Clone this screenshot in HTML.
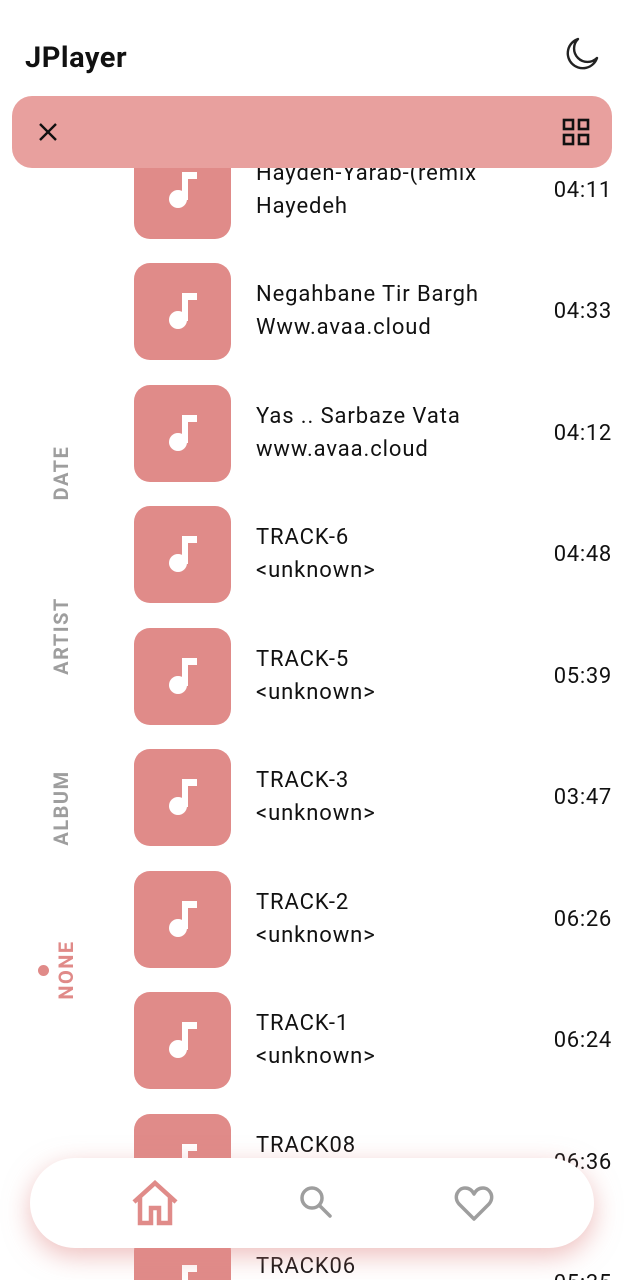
<!DOCTYPE html>
<html style="width:624px;height:1280px;overflow:hidden"><head><meta charset="utf-8"><style>
*{margin:0;padding:0;box-sizing:border-box}
body{width:624px;height:1280px;overflow:hidden;background:#fff;font-family:"Roboto","Liberation Sans",sans-serif;position:relative;color:#111}
.row{position:absolute;left:0;width:624px;height:97px}
.th{position:absolute;left:134px;top:0;width:97px;height:97px;border-radius:16px;background:#e08b89}
.th svg{position:absolute;left:0;top:0}
.t{position:absolute;left:256px;font-size:22px;line-height:24px;white-space:nowrap;letter-spacing:0.9px}
.t1{top:20px}.t2{top:53px}
.d{position:absolute;right:12px;top:37px;font-size:22px;line-height:24px;letter-spacing:0.7px}
.v{position:absolute;transform:rotate(-90deg);font-weight:bold;font-size:20px;color:#9e9e9e;letter-spacing:1.5px;white-space:nowrap;transform-origin:center}
</style></head><body>

<div style="position:absolute;left:25px;top:40px;font-size:29px;font-weight:bold;line-height:36px;letter-spacing:0.5px">JPlayer</div>
<svg style="position:absolute;left:562px;top:34px" width="40" height="40" viewBox="0 0 40 40"><path d="M16 5 A15 15 0 1 0 35 24 A12 12 0 0 1 16 5 Z" fill="none" stroke="#222" stroke-width="2.4" stroke-linejoin="round"/></svg>

<div class="row" style="top:142px"><div class="th"><svg width="97" height="97"><rect x="48" y="30" width="6" height="28" fill="#fff"/><rect x="48" y="30" width="15" height="7" fill="#fff"/><circle cx="44" cy="57" r="9" fill="#fff"/></svg></div><div class="t t1">Hayden-Yarab-(remix</div><div class="t t2">Hayedeh</div><div class="d">04:11</div></div>
<div class="row" style="top:263px"><div class="th"><svg width="97" height="97"><rect x="48" y="30" width="6" height="28" fill="#fff"/><rect x="48" y="30" width="15" height="7" fill="#fff"/><circle cx="44" cy="57" r="9" fill="#fff"/></svg></div><div class="t t1">Negahbane Tir Bargh</div><div class="t t2">Www.avaa.cloud</div><div class="d">04:33</div></div>
<div class="row" style="top:385px"><div class="th"><svg width="97" height="97"><rect x="48" y="30" width="6" height="28" fill="#fff"/><rect x="48" y="30" width="15" height="7" fill="#fff"/><circle cx="44" cy="57" r="9" fill="#fff"/></svg></div><div class="t t1">Yas .. Sarbaze Vata</div><div class="t t2">www.avaa.cloud</div><div class="d">04:12</div></div>
<div class="row" style="top:506px"><div class="th"><svg width="97" height="97"><rect x="48" y="30" width="6" height="28" fill="#fff"/><rect x="48" y="30" width="15" height="7" fill="#fff"/><circle cx="44" cy="57" r="9" fill="#fff"/></svg></div><div class="t t1">TRACK-6</div><div class="t t2">&lt;unknown&gt;</div><div class="d">04:48</div></div>
<div class="row" style="top:628px"><div class="th"><svg width="97" height="97"><rect x="48" y="30" width="6" height="28" fill="#fff"/><rect x="48" y="30" width="15" height="7" fill="#fff"/><circle cx="44" cy="57" r="9" fill="#fff"/></svg></div><div class="t t1">TRACK-5</div><div class="t t2">&lt;unknown&gt;</div><div class="d">05:39</div></div>
<div class="row" style="top:749px"><div class="th"><svg width="97" height="97"><rect x="48" y="30" width="6" height="28" fill="#fff"/><rect x="48" y="30" width="15" height="7" fill="#fff"/><circle cx="44" cy="57" r="9" fill="#fff"/></svg></div><div class="t t1">TRACK-3</div><div class="t t2">&lt;unknown&gt;</div><div class="d">03:47</div></div>
<div class="row" style="top:871px"><div class="th"><svg width="97" height="97"><rect x="48" y="30" width="6" height="28" fill="#fff"/><rect x="48" y="30" width="15" height="7" fill="#fff"/><circle cx="44" cy="57" r="9" fill="#fff"/></svg></div><div class="t t1">TRACK-2</div><div class="t t2">&lt;unknown&gt;</div><div class="d">06:26</div></div>
<div class="row" style="top:992px"><div class="th"><svg width="97" height="97"><rect x="48" y="30" width="6" height="28" fill="#fff"/><rect x="48" y="30" width="15" height="7" fill="#fff"/><circle cx="44" cy="57" r="9" fill="#fff"/></svg></div><div class="t t1">TRACK-1</div><div class="t t2">&lt;unknown&gt;</div><div class="d">06:24</div></div>
<div class="row" style="top:1114px"><div class="th"><svg width="97" height="97"><rect x="48" y="30" width="6" height="28" fill="#fff"/><rect x="48" y="30" width="15" height="7" fill="#fff"/><circle cx="44" cy="57" r="9" fill="#fff"/></svg></div><div class="t t1">TRACK08</div><div class="t t2">&lt;unknown&gt;</div><div class="d">06:36</div></div>
<div class="row" style="top:1235px;height:45px;overflow:hidden"><div class="th"><svg width="97" height="97"><rect x="48" y="30" width="6" height="28" fill="#fff"/><rect x="48" y="30" width="15" height="7" fill="#fff"/><circle cx="44" cy="57" r="9" fill="#fff"/></svg></div><div class="t t1">TRACK06</div><div class="t t2">&lt;unknown&gt;</div><div class="d">05:35</div></div>

<div style="position:absolute;left:12px;top:96px;width:600px;height:72px;border-radius:20px;background:#e8a09e"></div>
<svg style="position:absolute;left:36px;top:120px" width="24" height="24" viewBox="0 0 24 24"><path d="M4 4L20 20M20 4L4 20" stroke="#111" stroke-width="2.4"/></svg>
<svg style="position:absolute;left:562px;top:118px" width="28" height="28" viewBox="0 0 28 28" fill="none" stroke="#111" stroke-width="2.6"><rect x="2" y="2" width="9" height="9"/><rect x="17" y="2" width="9" height="9"/><rect x="2" y="17" width="9" height="9"/><rect x="17" y="17" width="9" height="9"/></svg>

<div class="v" style="left:21px;top:461px;width:80px;text-align:center">DATE</div>
<div class="v" style="left:11px;top:624px;width:100px;text-align:center">ARTIST</div>
<div class="v" style="left:11px;top:796px;width:100px;text-align:center">ALBUM</div>
<div class="v" style="left:16px;top:958px;width:100px;text-align:center;color:#e08a88">NONE</div>
<div style="position:absolute;left:38px;top:965px;width:11px;height:11px;border-radius:50%;background:#e08a88"></div>

<div style="position:absolute;left:30px;top:1158px;width:564px;height:90px;border-radius:45px;background:#fff;box-shadow:0 8px 26px rgba(224,139,137,0.55)"></div>
<svg style="position:absolute;left:130px;top:1180px" width="50" height="46" viewBox="0 0 50 46" fill="none" stroke="#e08b89" stroke-width="4.5" stroke-linejoin="miter"><path d="M4 22 L25 3 L46 22 M10 17 V43 H21 V28 H29 V43 H40 V17"/></svg>
<svg style="position:absolute;left:298px;top:1184px" width="36" height="36" viewBox="0 0 36 36" fill="none" stroke="#9e9e9e" stroke-width="3.5"><circle cx="14" cy="14" r="10"/><path d="M21.5 21.5 L32 32" stroke-linecap="round"/></svg>
<svg style="position:absolute;left:454px;top:1186px" width="40" height="36" viewBox="0 0 40 36" fill="none" stroke="#9e9e9e" stroke-width="3.5" stroke-linejoin="round"><path d="M20 33 L5 18 C-1 11 4 2 11 2 C15 2 18 4 20 8 C22 4 25 2 29 2 C36 2 41 11 35 18 Z"/></svg>
</body></html>
